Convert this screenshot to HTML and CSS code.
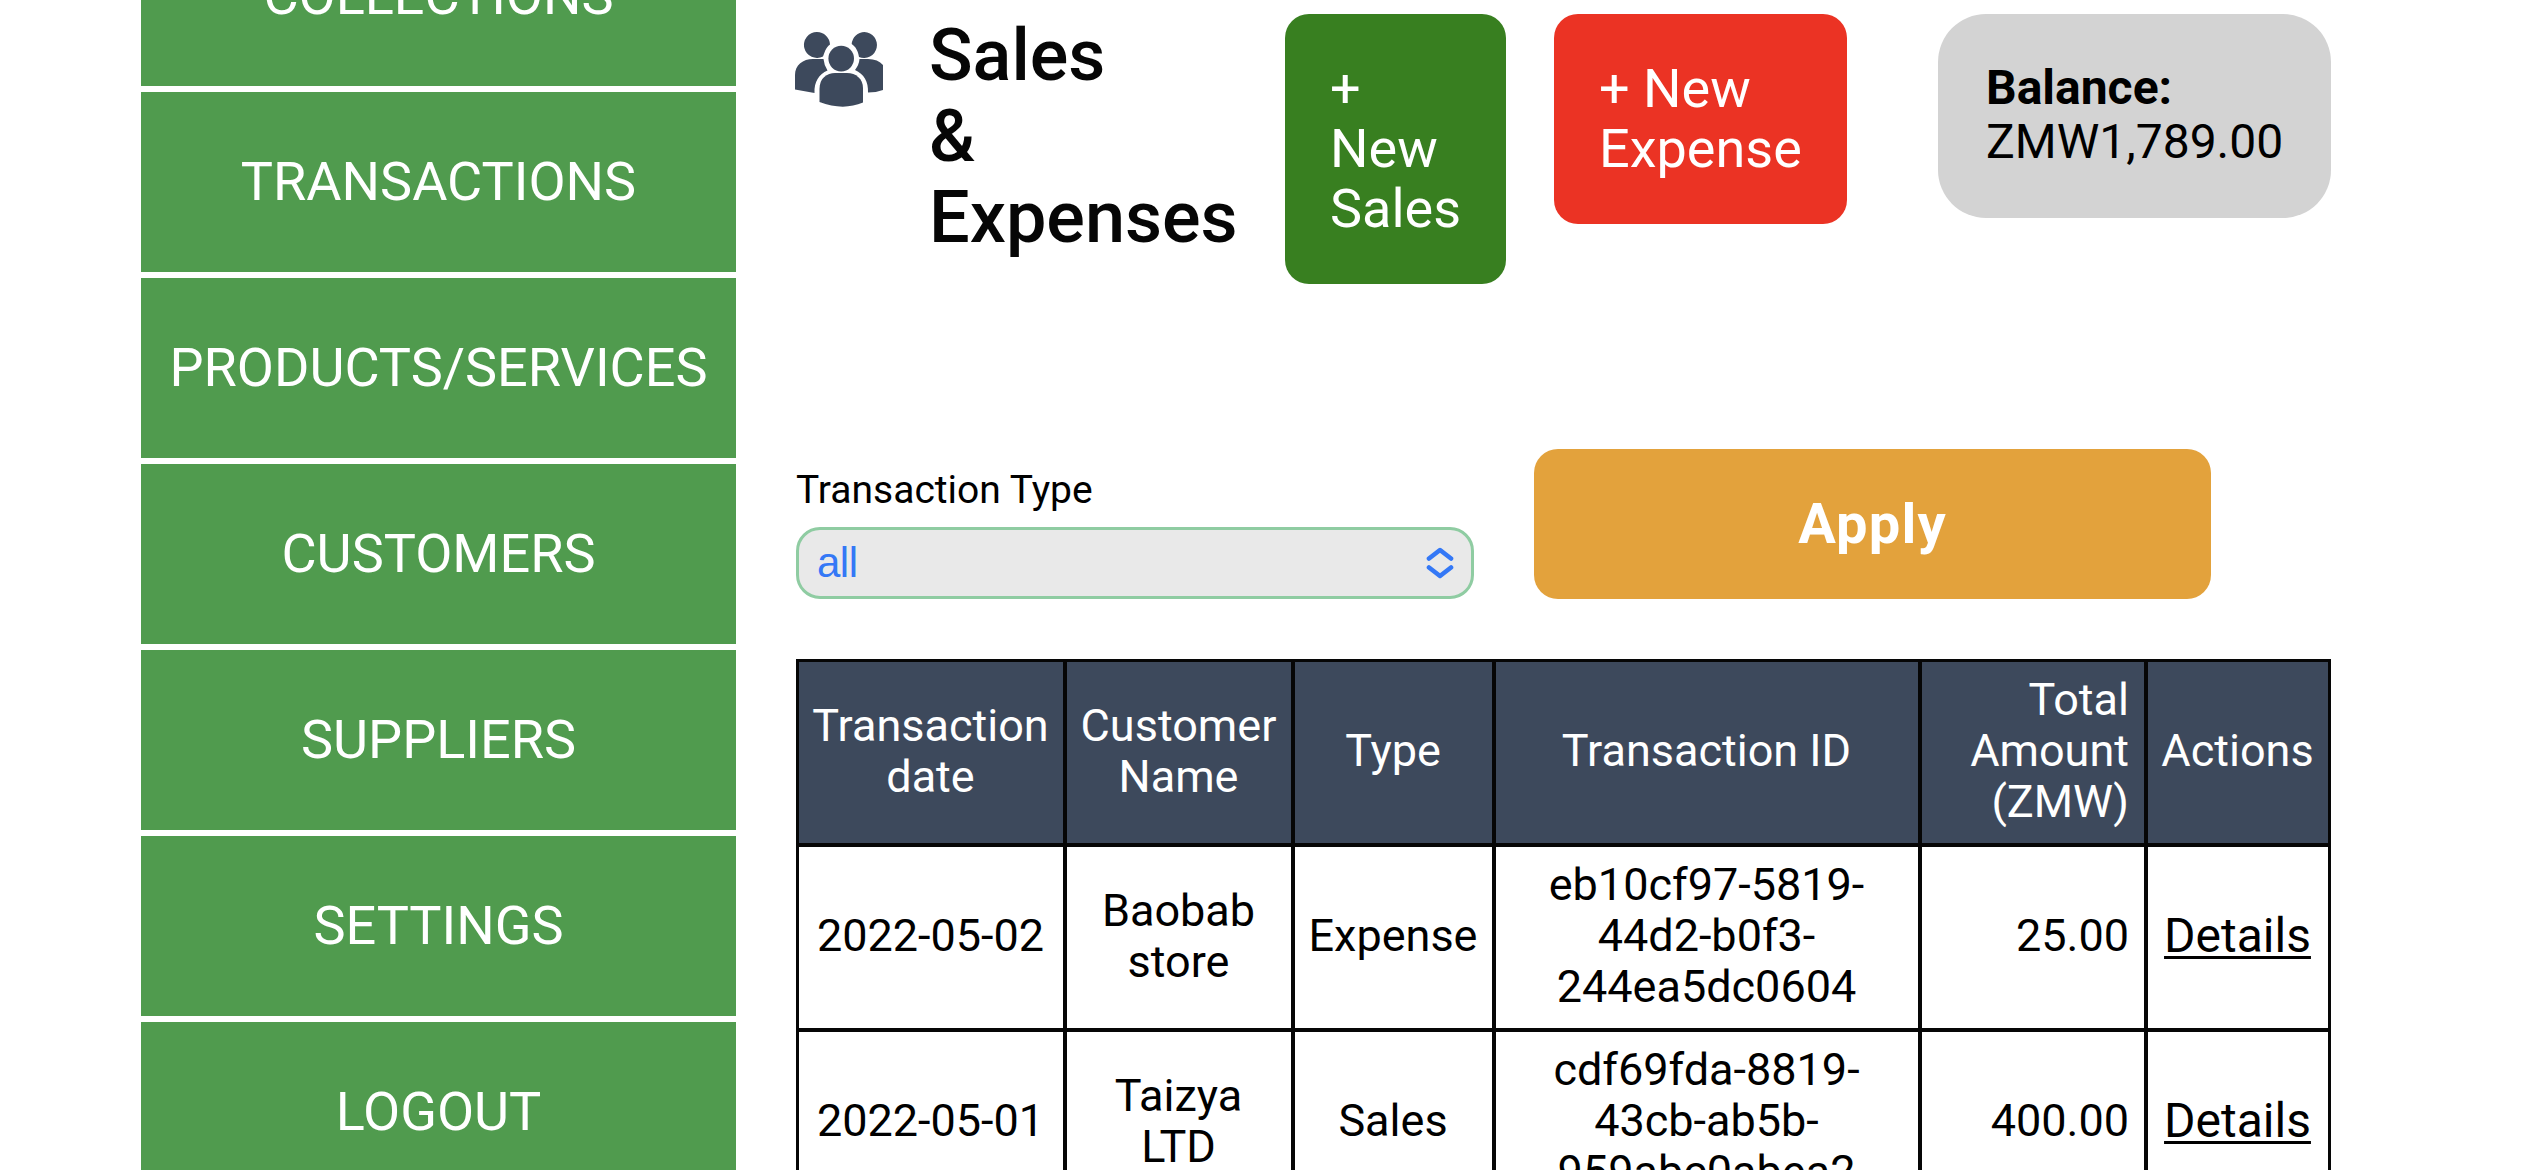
FILE: index.html
```html
<!DOCTYPE html>
<html lang="en">
<head>
<meta charset="utf-8">
<title>Sales &amp; Expenses</title>
<link rel="stylesheet" href="styles.css">
</head>
<body>
<div class="layout">
  <nav class="sidebar">
    <a class="nav-item">COLLECTIONS</a>
    <a class="nav-item">TRANSACTIONS</a>
    <a class="nav-item">PRODUCTS/SERVICES</a>
    <a class="nav-item">CUSTOMERS</a>
    <a class="nav-item">SUPPLIERS</a>
    <a class="nav-item">SETTINGS</a>
    <a class="nav-item">LOGOUT</a>
  </nav>
  <main class="content">
    <header class="page-header">
      <svg class="people" viewBox="0 0 88 75" width="88" height="75">
        <path d="M22 0a13 13 0 0 1 13 12.500C30.500 15.500 29.500 21 28 24.500A13 13 0 1 1 22 0Z"/>
        <path d="M69.500 0a13 13 0 1 1-5.500 25C63 19 61 15 56.700 12A13 13 0 0 1 69.500 0Z"/>
        <circle cx="46.200" cy="26.600" r="12.800"/>
        <path d="M0 57.500V43C0 33 8 27 18 27H28.500Q29 33 32.500 38.500C24 42 19 50 19.500 61Z"/>
        <path d="M64.500 27H73Q83 27 88 33V58Q81 60.500 73 60.500C73.500 50 69 42 60 38Q64 33 64.500 27Z"/>
        <path d="M24.500 70V57C24.500 46 32 41 40 41H52C61 41 68 47 68 56V70.500Q48 79 24.500 70Z"/>
      </svg>
      <h1 class="title">Sales<br>&amp;<br>Expenses</h1>
      <a class="action sales">+<br>New<br>Sales</a>
      <a class="action expense">+ New<br>Expense</a>
      <div class="balance"><strong>Balance:</strong><br>ZMW1,789.00</div>
    </header>
    <section class="filters">
      <div class="field">
        <span class="label">Transaction Type</span>
        <div class="select">
          <span>all</span>
          <svg class="chevrons" viewBox="0 0 28 32" width="28" height="32"><path d="M3 11.500 14 3 25 11.500M3 20.500 14 29 25 20.500"/></svg>
        </div>
      </div>
      <button class="apply">Apply</button>
    </section>
    <table class="ledger">
      <colgroup><col class="c1"><col class="c2"><col class="c3"><col class="c4"><col class="c5"><col class="c6"></colgroup>
      <thead>
        <tr><th>Transaction date</th><th>Customer Name</th><th>Type</th><th>Transaction ID</th><th class="amount">Total<br>Amount<br>(ZMW)</th><th>Actions</th></tr>
      </thead>
      <tbody>
        <tr><td>2022-05-02</td><td>Baobab store</td><td>Expense</td><td>eb10cf97-5819-<br>44d2-b0f3-<br>244ea5dc0604</td><td class="amount">25.00</td><td><a class="details">Details</a></td></tr>
        <tr><td>2022-05-01</td><td>Taizya<br>LTD</td><td>Sales</td><td>cdf69fda-8819-<br>43cb-ab5b-<br>959abc0abea2</td><td class="amount">400.00</td><td><a class="details">Details</a></td></tr>
      </tbody>
    </table>
  </main>
</div>
</body>
</html>
```
FILE: styles.css
```css
* { box-sizing: border-box; }
html, body { margin: 0; height: 1170px; overflow: hidden; }
body { background: #fff; color: #000; font-family: Roboto, "Liberation Sans", sans-serif; }

.layout { display: flex; align-items: flex-start; gap: 60px; padding-left: 141px; height: 1170px; overflow: hidden; }

.sidebar { display: flex; flex-direction: column; gap: 6px; width: 595px; margin-top: -94px; }
.nav-item { height: 180px; padding-top: 60px; background: #509b4e; color: #fff; font-size: 54px; line-height: 60px; text-align: center; }

.content { width: 1535px; padding-top: 14px; }
.page-header { display: flex; align-items: flex-start; height: 435px; }
.people { flex: none; margin: 18px 46px 0 -1px; fill: #3d495c; }
.title { flex: none; width: 308px; margin: 1px 48px 0 0; font-size: 72px; line-height: 81px; font-weight: 500; color: #060606; }
.action { flex: none; padding: 45px; border-radius: 24px; color: #fff; font-size: 54px; line-height: 60px; }
.sales { width: 221px; margin-right: 48px; background: #387f20; }
.expense { width: 293px; background: #eb3324; }
.balance { flex: none; width: 393px; margin-left: auto; padding: 47px 48px 49px; border-radius: 48px; background: #d3d3d3; font-size: 48px; line-height: 54px; white-space: nowrap; }

.filters { display: flex; gap: 60px; height: 150px; margin-bottom: 60px; }
.field { width: 678px; padding-top: 19px; }
.label { display: block; height: 59px; font-size: 39px; line-height: 45px; }
.select { display: flex; align-items: center; justify-content: space-between; height: 72px; padding: 0 17px 0 18px; border: 3px solid #8fcca2; border-radius: 24px; background: #e9e9e9; color: #3478f6; font: 42px/48px "Liberation Sans", sans-serif; letter-spacing: -0.5px; }
.chevrons { fill: none; stroke: #3478f6; stroke-width: 4.6; stroke-linecap: round; stroke-linejoin: round; }
.apply { width: 677px; padding: 0; border: 0; border-radius: 24px; background: #e3a23c; color: #fff; font: 700 56px/60px Roboto, sans-serif; letter-spacing: 1.2px; }

.ledger { width: 1535px; table-layout: fixed; border: 3px solid #060606; border-collapse: separate; border-spacing: 0; font-size: 45px; line-height: 51px; }
.c1 { width: 264px; }
.c2 { width: 228px; }
.c3 { width: 201px; }
.c4 { width: 426px; }
.c5 { width: 226px; }
.c6 { width: 184px; }
.ledger th, .ledger td { height: 185px; padding: 12px 12.5px 16px 11.5px; border: 0 solid #060606; border-width: 4px 0 0 4px; text-align: center; vertical-align: middle; font-weight: 400; }
.ledger th { height: 181px; border-top-width: 0; background: #3d495c; color: #fff; }
.ledger th:first-child, .ledger td:first-child { border-left-width: 0; }
.ledger .amount { padding-right: 15px; text-align: right; }
.details { font-size: 48px; text-decoration: underline; text-decoration-thickness: 3px; text-underline-offset: 4px; }
```
